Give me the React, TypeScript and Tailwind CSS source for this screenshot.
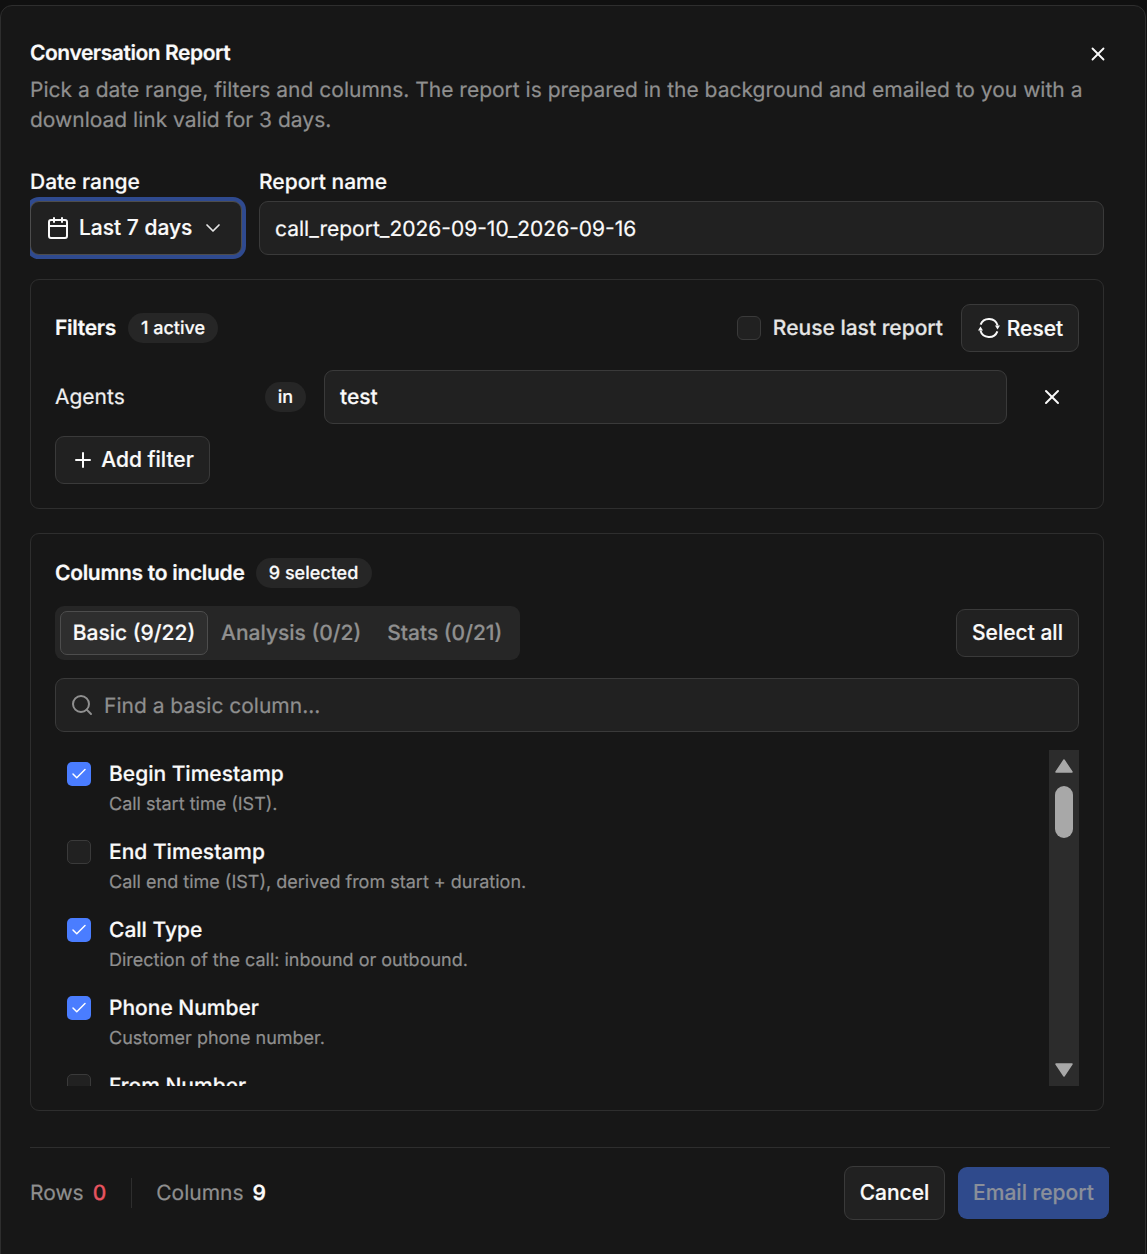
import { Calendar, ChevronDown, Check, Plus, Search, X } from "lucide-react";

const cols = [
  { name: "Begin Timestamp", desc: "Call start time (IST).", on: true },
  { name: "End Timestamp", desc: "Call end time (IST), derived from start + duration.", on: false },
  { name: "Call Type", desc: "Direction of the call: inbound or outbound.", on: true },
  { name: "Phone Number", desc: "Customer phone number.", on: true },
  { name: "From Number", desc: "Caller number.", on: false },
];

function ResetIcon() {
  return (
    <svg width="24" height="24" viewBox="0 0 24 24" fill="none" stroke="currentColor" strokeWidth="2">
      <path d="M3.6 8.7A9 9 0 0 1 20.6 9.5" />
      <path d="M20.4 15.3A9 9 0 0 1 3.4 14.5" />
      <path d="M18 9.5 H23 L20.5 13.5 Z" fill="currentColor" stroke="none" />
      <path d="M1 14.5 H6 L3.5 10.5 Z" fill="currentColor" stroke="none" />
    </svg>
  );
}

export default function App() {
  return (
    <div className="h-[1254px] w-[1147px] overflow-hidden bg-[#101010] pt-[5px] font-['Inter',sans-serif] text-[#fafafa] [text-rendering:geometricPrecision] [-webkit-text-stroke:0.2px]">
      <div className="h-[1262px] w-[1146px] rounded-[12px] border border-[#2e2e2e] bg-[#171717] pl-[29px] pr-[36px] pt-[35px]">
        <div className="relative">
          <h2 className="text-[21px] font-semibold leading-[26px] tracking-[-0.45px]">Conversation Report</h2>
          <button className="absolute right-[0px] top-[2px] text-[#fafafa]"><X size={22} strokeWidth={2} /></button>
          <p className="mt-[9px] w-[1074px] text-[21px] leading-[30px] text-[#8f8f8f]">
            Pick a date range, filters and columns. The report is prepared in the background and emailed to you with a download link valid for 3 days.
          </p>
        </div>

        <div className="mt-[31px] flex w-[1074px] gap-[17px]">
          <div className="flex flex-col">
            <label className="pt-[1px] text-[21px] font-medium leading-[30px]">Date range</label>
            <button className="mt-[3px] flex h-[54px] w-[212px] items-center rounded-[9px] border border-[#4d4d4d] bg-[#212121] pl-[15px] text-[21px] font-medium shadow-[0_0_0_4px_#2f4a8f] [clip-path:inset(-4px_-4px_-4px_0)]">
              <Calendar size={24} strokeWidth={2} />
              <span className="ml-[9px]">Last 7 days</span>
              <ChevronDown size={24} strokeWidth={1.7} className="ml-[9px] text-[#e5e5e5]" />
            </button>
          </div>
          <div className="flex flex-1 flex-col">
            <label className="pt-[1px] text-[21px] font-medium leading-[30px]">Report name</label>
            <div className="mt-[3px] flex h-[54px] items-center rounded-[9px] border border-[#3a3a3a] bg-[#212121] px-[15px] text-[21px]"><span className="pt-[3px]">call_report_2026-09-10_2026-09-16</span></div>
          </div>
        </div>

        <section className="mt-[24px] h-[230px] w-[1074px] rounded-[9px] border border-[#2e2e2e] px-[24px] pt-[24px]">
          <div className="flex h-[48px] items-center">
            <span className="pt-[2px] text-[21px] font-semibold tracking-[-0.3px]">Filters</span>
            <span className="ml-[12px] flex h-[30px] w-[90px] items-center justify-center rounded-full bg-[#262626] pt-[1px] text-[18px] font-medium">1 active</span>
            <span className="ml-auto h-[24px] w-[24px] rounded-[6px] border border-[#3a3a3a] bg-[#212121]" />
            <span className="ml-[12px] mr-[18px] pt-[2px] text-[21px] font-medium text-[#e5e5e5]">Reuse last report</span>
            <button className="flex h-[48px] w-[118px] items-center justify-center gap-[6px] rounded-[9px] border border-[#3a3a3a] bg-[#212121] text-[21px] font-medium">
              <ResetIcon /><span className="pt-[1px]">Reset</span>
            </button>
          </div>
          <div className="mt-[18px] flex h-[54px] items-center">
            <span className="w-[210px] pt-[2px] text-[21px] text-[#f0f0f0]">Agents</span>
            <span className="flex h-[30px] w-[41px] items-center justify-center rounded-full bg-[#262626] text-[18px] font-medium">in</span>
            <div className="ml-[18px] flex h-[54px] w-[683px] items-center rounded-[9px] border border-[#3a3a3a] bg-[#212121] px-[15px] text-[21px] font-medium"><span className="pt-[2px]">test</span></div>
            <button className="ml-[33px]"><X size={24} strokeWidth={2} /></button>
          </div>
          <button className="mt-[12px] flex h-[48px] w-[155px] items-center justify-center gap-[6px] rounded-[9px] border border-[#3a3a3a] bg-[#212121] text-[21px] font-medium">
            <Plus size={24} strokeWidth={2} />Add filter
          </button>
        </section>

        <section className="mt-[24px] h-[578px] w-[1074px] overflow-hidden rounded-[9px] border border-[#2e2e2e] px-[24px] pt-[24px]">
          <div className="flex h-[30px] items-center">
            <span className="pt-[2px] text-[21px] font-semibold tracking-[-0.3px]">Columns to include</span>
            <span className="ml-[11px] flex h-[30px] w-[116px] items-center justify-center rounded-full bg-[#262626] text-[18px] font-medium">9 selected</span>
          </div>
          <div className="mt-[18px] flex items-center justify-between">
            <div className="flex h-[54px] w-[465px] items-center rounded-[9px] bg-[#262626] px-[5px] text-[21px] font-medium text-[#8f8f8f]">
              <span className="flex h-[44px] w-[148px] items-center justify-center rounded-[7px] border border-[#4d4d4d] bg-[#2e2e2e] pt-[2px] text-[#fafafa]">Basic (9/22)</span>
              <span className="ml-[13px] pt-[2px]">Analysis (0/2)</span>
              <span className="ml-[26px] pt-[2px]">Stats (0/21)</span>
            </div>
            <button className="h-[48px] w-[123px] rounded-[9px] border border-[#3a3a3a] bg-[#212121] text-[21px] font-medium">Select all</button>
          </div>
          <div className="mt-[18px] flex h-[54px] items-center rounded-[9px] border border-[#3a3a3a] bg-[#212121] pl-[14px] text-[21px] text-[#8f8f8f]">
            <Search size={24} strokeWidth={2} />
            <span className="ml-[10px] pt-[3px]">Find a basic column...</span>
          </div>
          <div className="relative mt-[18px] h-[336px] overflow-hidden">
            <div className="flex flex-col pl-[12px] pt-[8px]">
              {cols.map((c) => (
                <div key={c.name} className="flex h-[78px] shrink-0 gap-[18px]">
                  {c.on ? (
                    <span className="mt-[4px] flex h-[24px] w-[24px] items-center justify-center rounded-[5px] bg-[#4a7dff] text-white"><Check size={18} strokeWidth={2} /></span>
                  ) : (
                    <span className="mt-[4px] h-[24px] w-[24px] rounded-[5px] border border-[#3a3a3a] bg-[#212121]" />
                  )}
                  <div className="pt-[2px]">
                    <div className="text-[21px] font-medium leading-[30px]">{c.name}</div>
                    <div className="text-[18px] leading-[30px] text-[#8f8f8f]">{c.desc}</div>
                  </div>
                </div>
              ))}
            </div>
            <div className="absolute right-0 top-0 h-[336px] w-[30px] bg-[#2c2c2c]">
              <svg className="absolute left-[6px] top-[9px]" width="18" height="14" viewBox="0 0 18 14"><path d="M9 1 L17 13 H1 Z" fill="#a8a8a8" stroke="#a8a8a8" strokeLinejoin="round" strokeWidth="1.5" /></svg>
              <div className="absolute left-[6px] top-[36px] h-[52px] w-[18px] rounded-full bg-[#a8a8a8]" />
              <svg className="absolute bottom-[9px] left-[6px]" width="18" height="14" viewBox="0 0 18 14"><path d="M1 1 H17 L9 13 Z" fill="#a8a8a8" stroke="#a8a8a8" strokeLinejoin="round" strokeWidth="1.5" /></svg>
            </div>
          </div>
        </section>

        <footer className="mt-[36px] flex h-[100px] w-[1080px] items-start justify-between border-t border-[#2e2e2e] pr-[1px] pt-[18px]">
          <div className="flex h-[54px] items-center text-[21px] text-[#8f8f8f]">
            <span className="pt-[2px]">Rows</span>
            <span className="ml-[9px] pt-[2px] font-medium text-[#e5535f]">0</span>
            <span className="ml-[25px] mr-[24px] h-[30px] w-px bg-[#2e2e2e]" />
            <span className="pt-[2px]">Columns</span>
            <span className="ml-[9px] pt-[2px] font-semibold text-[#fafafa]">9</span>
          </div>
          <div className="flex items-center gap-[13px]">
            <button className="h-[54px] w-[101px] rounded-[9px] border border-[#3a3a3a] bg-[#212121] text-[21px] font-medium">Cancel</button>
            <button className="h-[52px] w-[151px] rounded-[9px] bg-[#2f4a8c] text-[21px] font-medium text-[#8a8f9a]">Email report</button>
          </div>
        </footer>
      </div>
    </div>
  );
}
